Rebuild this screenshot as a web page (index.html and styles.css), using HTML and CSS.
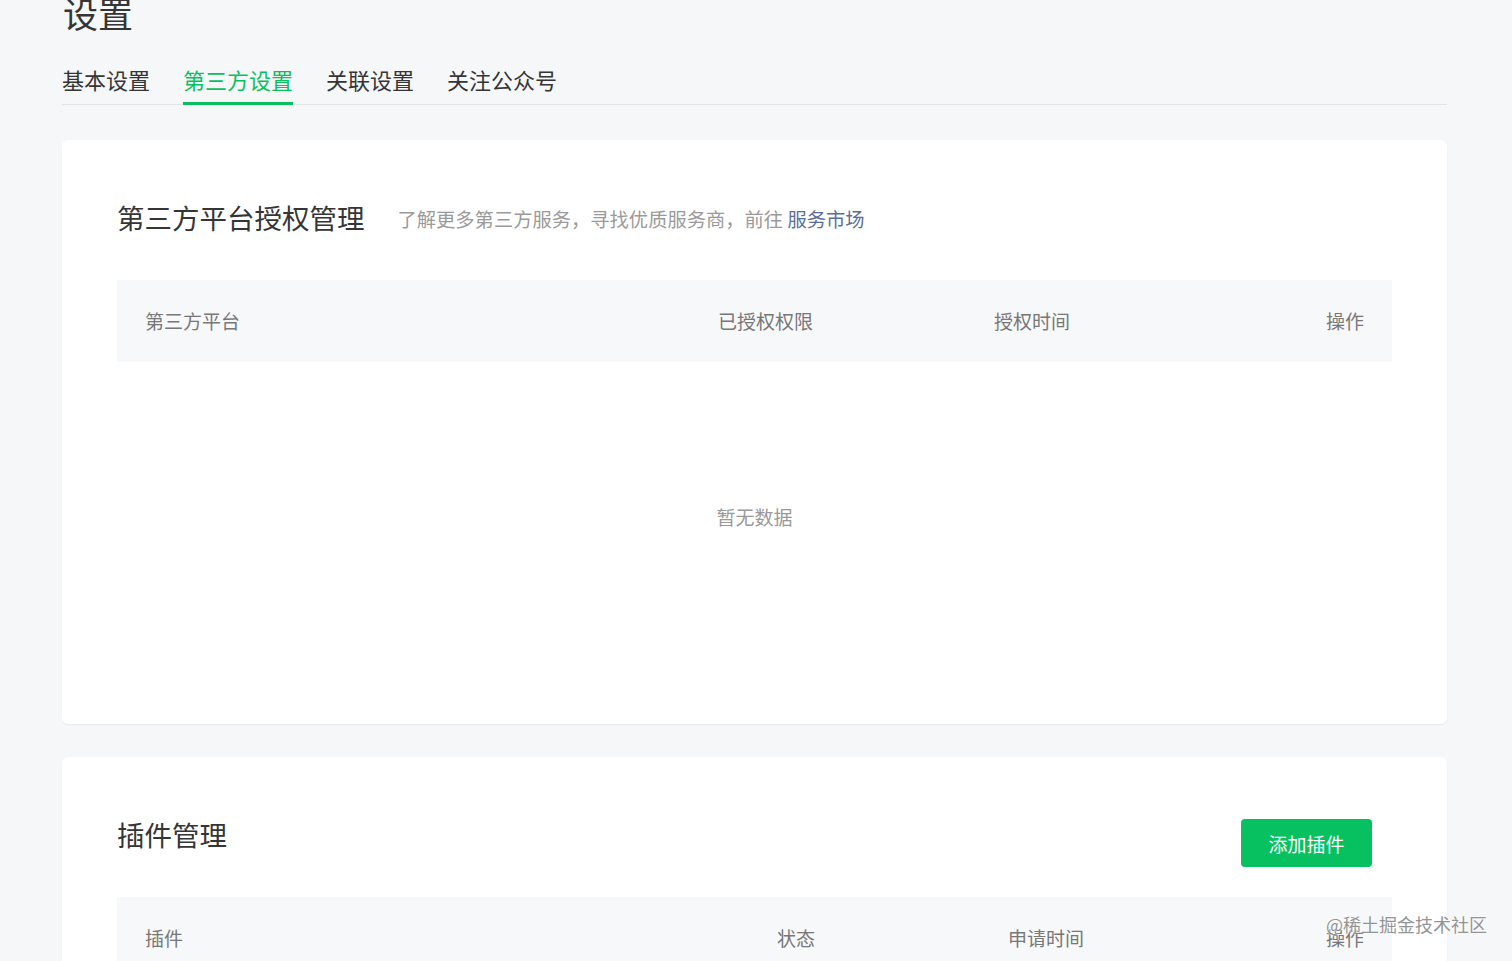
FILE: index.html
```html
<!DOCTYPE html>
<html lang="zh-CN">
<head>
<meta charset="utf-8">
<title>设置</title>
<link rel="stylesheet" href="styles.css">
</head>
<body>
<div class="page">
  <h1 class="page-title">设置</h1>
  <nav class="tabs">
    <a class="tab">基本设置</a>
    <a class="tab active">第三方设置</a>
    <a class="tab">关联设置</a>
    <a class="tab">关注公众号</a>
  </nav>

  <section class="card card-auth">
    <div class="card-head">
      <h2 class="card-title">第三方平台授权管理</h2>
      <p class="card-desc">了解更多第三方服务，寻找优质服务商，前往 <a class="link">服务市场</a></p>
    </div>
    <div class="table-head cols-auth">
      <span>第三方平台</span>
      <span>已授权权限</span>
      <span>授权时间</span>
      <span class="col-op">操作</span>
    </div>
    <div class="empty">暂无数据</div>
  </section>

  <section class="card card-plugin">
    <div class="card-head plugin-head">
      <h2 class="card-title">插件管理</h2>
      <button class="btn-primary">添加插件</button>
    </div>
    <div class="table-head cols-plugin">
      <span>插件</span>
      <span>状态</span>
      <span>申请时间</span>
      <span class="col-op">操作</span>
    </div>
  </section>
</div>
<div class="watermark">@稀土掘金技术社区</div>
</body>
</html>
```

FILE: styles.css
```css
* { box-sizing: border-box; }
html, body { margin: 0; padding: 0; }
body {
  background: #f6f7f9;
  font-family: "Noto Sans CJK SC", "Noto Sans", sans-serif;
  color: #333;
  overflow: hidden;
  height: 961px;
}
.page {
  width: 1385px;
  margin-left: 62px;
}
.page-title {
  margin: -7px 0 0 1px;
  font-size: 35px;
  line-height: 40px;
  font-weight: 400;
  color: #353535;
}
.tabs {
  display: flex;
  gap: 33px;
  margin-top: 31px;
  border-bottom: 1px solid #e3e4e6;
}
.tab {
  font-size: 22px;
  line-height: 30px;
  padding-bottom: 8px;
  border-bottom: 3px solid transparent;
  margin-bottom: -1px;
  color: #353535;
  cursor: pointer;
}
.tab.active {
  color: #07c160;
  border-bottom-color: #07c160;
}
.card {
  background: #fff;
  border-radius: 6px;
  box-shadow: 0 1px 2px rgba(0, 0, 0, 0.06);
  padding: 59px 55px 0 55px;
}
.card-auth {
  margin-top: 35px;
  padding-bottom: 54px;
}
.card-plugin {
  margin-top: 33px;
  height: 260px;
}
.card-head {
  display: flex;
  align-items: center;
  height: 36px;
}
.card-title {
  margin: 0;
  font-size: 27.5px;
  line-height: 36px;
  font-weight: 400;
  color: #353535;
}
.card-desc {
  margin: 0 0 0 33px;
  font-size: 19.3px;
  line-height: 28px;
  color: #9a9a9a;
  position: relative;
  top: 2px;
}
.link {
  color: #5b6e99;
  cursor: pointer;
}
.table-head {
  margin-top: 45px;
  height: 82px;
  background: #f7f8fa;
  padding: 0 28px 2px;
  display: grid;
  align-items: center;
  font-size: 19px;
  color: #777;
}
.cols-auth { grid-template-columns: 573px 276px 1fr 60px; }
.cols-plugin { grid-template-columns: 632px 231px 1fr 60px; margin-top: 45px; }
.col-op { text-align: right; }
.empty {
  height: 308px;
  display: flex;
  align-items: center;
  justify-content: center;
  font-size: 19px;
  color: #999;
}
.plugin-head {
  justify-content: space-between;
  align-items: flex-start;
}
.btn-primary {
  margin: 3px 20px 0 0;
  width: 131px;
  height: 48px;
  border: none;
  border-radius: 4px;
  background: #07c160;
  color: #fff;
  font-family: inherit;
  font-size: 19px;
  cursor: pointer;
}
.watermark {
  position: absolute;
  left: 1326px;
  top: 910px;
  font-size: 18px;
  line-height: 28px;
  color: #8a8a8a;
  text-shadow: 0 0 2px #fff, 0 0 2px #fff;
  opacity: 0.9;
}
```
